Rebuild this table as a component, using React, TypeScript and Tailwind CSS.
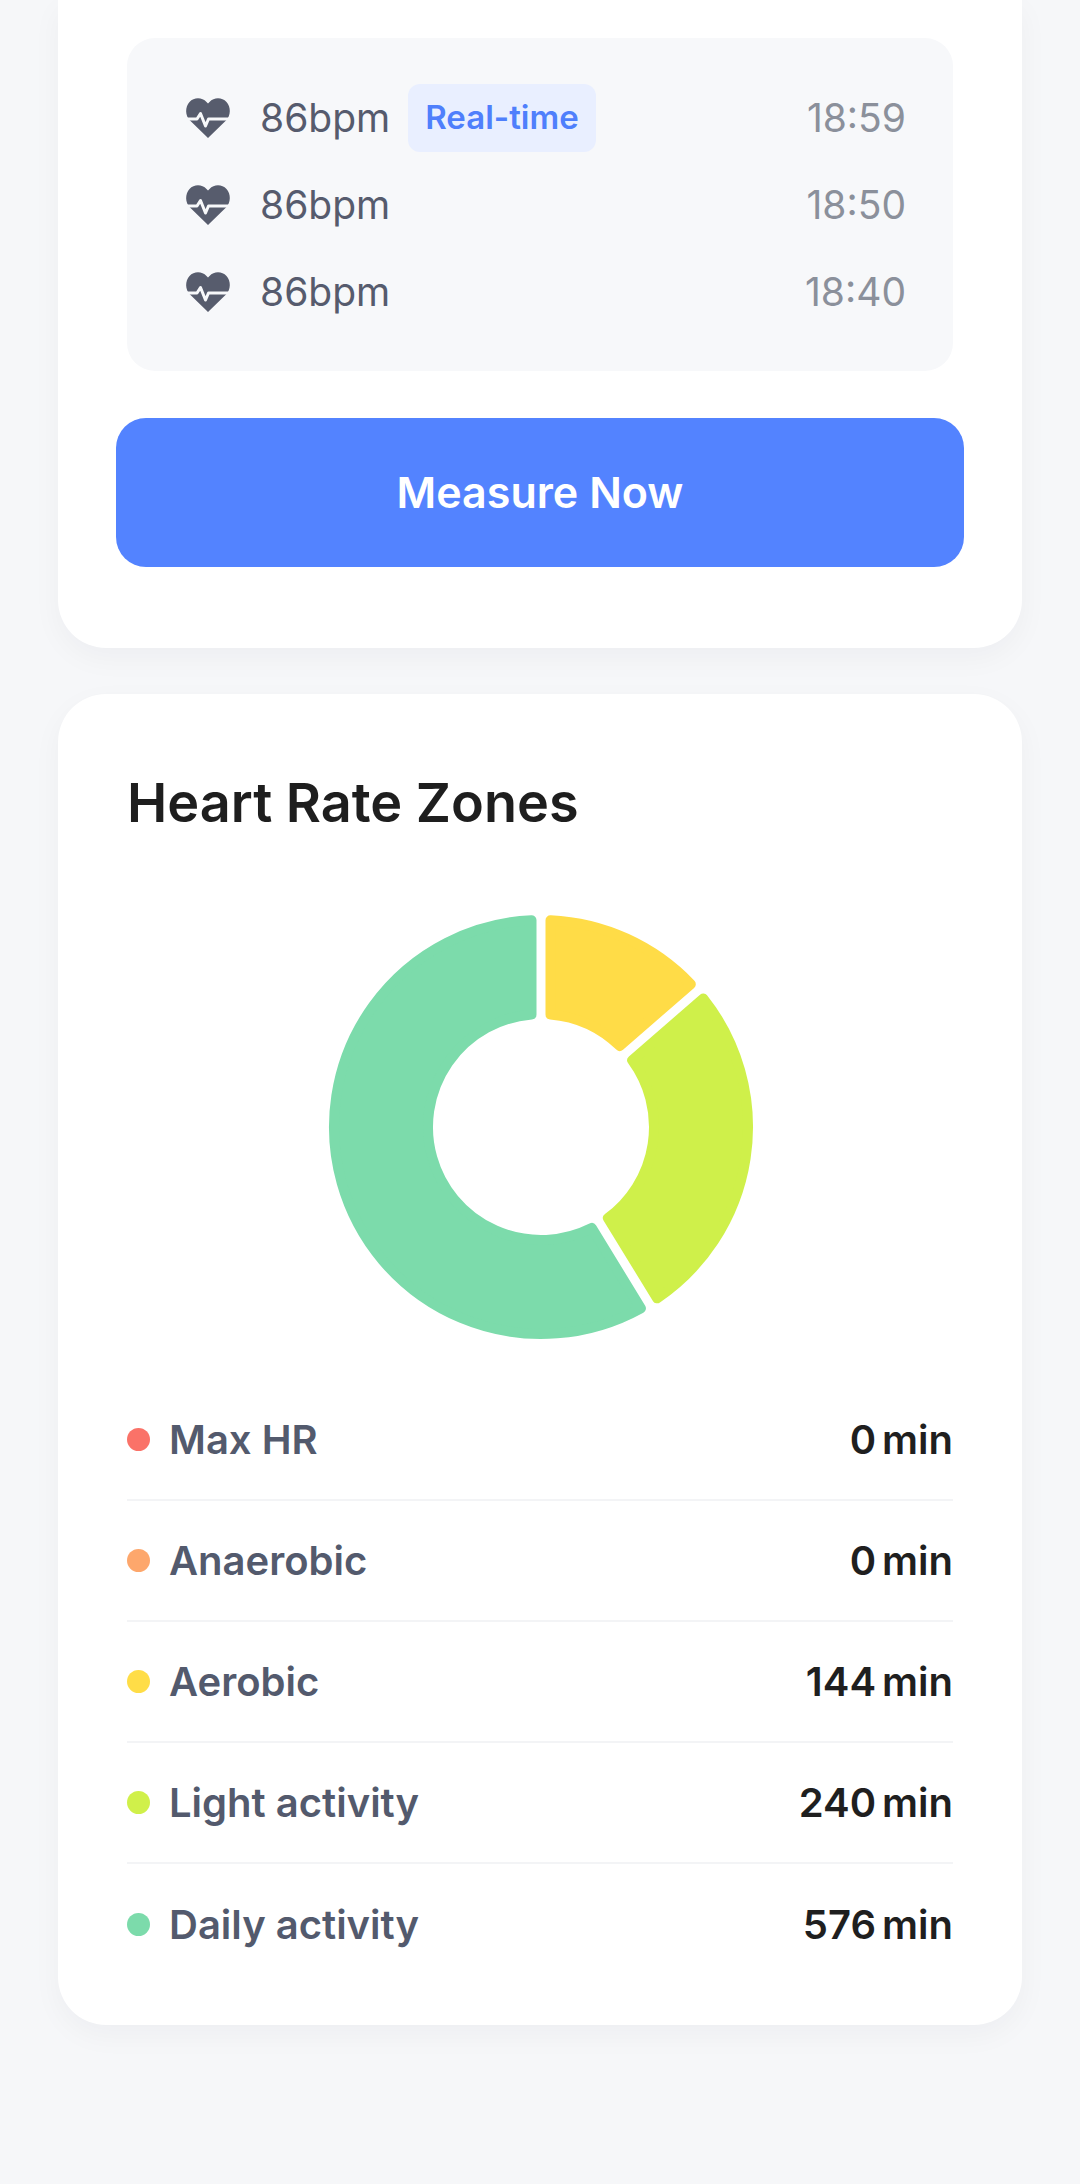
import React from 'react';

const font = { fontFamily: 'Inter, "Noto Sans", sans-serif' };

const readings = [
  { bpm: '86bpm', time: '18:59', live: true },
  { bpm: '86bpm', time: '18:50', live: false },
  { bpm: '86bpm', time: '18:40', live: false },
];

const zones = [
  { label: 'Max HR', value: '0', dot: 'bg-[#fa7268]' },
  { label: 'Anaerobic', value: '0', dot: 'bg-[#fda76c]' },
  { label: 'Aerobic', value: '144', dot: 'bg-[#ffdd47]' },
  { label: 'Light activity', value: '240', dot: 'bg-[#d0f04a]' },
  { label: 'Daily activity', value: '576', dot: 'bg-[#7cdbab]' },
];

// degrees from 12 o'clock, clockwise
const segments = [
  { from: 0, to: 49, color: '#ffdc47' },
  { from: 49, to: 148.5, color: '#cff04a' },
  { from: 148.5, to: 360, color: '#7cdbab' },
];

function HeartPulse() {
  return (
    <svg width="54" height="46" viewBox="0 0 54 46" className="shrink-0">
      <path
        d="M26 43 L8 25.5 C3 20.5 3 12 7.5 7 C12 2 20 2 24.5 7 L26 8.6 L27.5 7 C32 2 40 2 44.5 7 C49 12 49 20.5 44 25.5 Z"
        fill="#575c6d"
      />
      <polyline
        points="0,24 15,24 18.5,18.5 23.5,31 26.5,24 54,24"
        fill="none"
        stroke="#f7f8fa"
        strokeWidth="3"
        strokeLinejoin="round"
        strokeLinecap="round"
      />
    </svg>
  );
}

function Donut() {
  const cx = 220;
  const cy = 220;
  const R = 212;
  const r = 108;
  const gap = 4.5;
  const corner = 5;
  const ro = R - corner;
  const ri = r + corner;
  const pt = (rad: number, deg: number) => {
    const t = (deg * Math.PI) / 180;
    return `${(cx + rad * Math.sin(t)).toFixed(2)} ${(cy - rad * Math.cos(t)).toFixed(2)}`;
  };
  const off = (rad: number) => (Math.asin((gap + corner) / rad) * 180) / Math.PI;

  return (
    <svg width="440" height="440" viewBox="0 0 440 440">
      {segments.map((s) => {
        const os = s.from + off(ro);
        const oe = s.to - off(ro);
        const is = s.from + off(ri);
        const ie = s.to - off(ri);
        const large = oe - os > 180 ? 1 : 0;
        const largeIn = ie - is > 180 ? 1 : 0;
        const d = `M ${pt(ro, os)} A ${ro} ${ro} 0 ${large} 1 ${pt(ro, oe)} L ${pt(ri, ie)} A ${ri} ${ri} 0 ${largeIn} 0 ${pt(ri, is)} Z`;
        return (
          <path key={s.from} d={d} fill={s.color} stroke={s.color} strokeWidth={corner * 2} strokeLinejoin="round" />
        );
      })}
    </svg>
  );
}

export default function App() {
  return (
    <div className="min-h-[2184px] w-[1080px] bg-[#f6f7f9] pb-[160px]" style={font}>
      <div className="mx-[58px] rounded-b-[48px] bg-white px-[69px] pt-[38px] pb-[81px] shadow-[0_10px_30px_rgba(20,30,60,0.04)]">
        <div className="rounded-[28px] bg-[#f7f8fa] py-[36px] pl-[55px] pr-[47px]">
          {readings.map((r) => (
            <div key={r.time} className="flex h-[87px] items-center justify-between">
              <div className="flex items-center">
                <HeartPulse />
                <span className="ml-[24px] text-[39px] leading-none text-[#565b6d]">{r.bpm}</span>
                {r.live && (
                  <span className="ml-[18px] flex h-[68px] items-center rounded-[12px] bg-[#e9efff] px-[17px] text-[33px] font-semibold leading-none text-[#4f7ffc]">
                    Real-time
                  </span>
                )}
              </div>
              <span className="text-[39px] leading-none text-[#8b909b]">{r.time}</span>
            </div>
          ))}
        </div>
        <button className="-mx-[11px] mt-[47px] flex h-[149px] w-[calc(100%+22px)] items-center justify-center rounded-[30px] bg-[#5383ff] text-[43px] font-semibold text-white">
          Measure Now
        </button>
      </div>

      <div className="mx-[58px] mt-[46px] rounded-[48px] bg-white px-[69px] pt-[82px] pb-[40px] shadow-[0_10px_30px_rgba(20,30,60,0.04)]">
        <h2 className="text-[54px] font-semibold leading-none text-[#1e1e1e]">Heart Rate Zones</h2>
        <div className="mt-[77px] flex justify-center pl-[2px]">
          <Donut />
        </div>
        <div className="mt-[33px]">
          {zones.map((z, i) => (
            <div
              key={z.label}
              className={`flex h-[121px] items-center justify-between ${i < zones.length - 1 ? 'border-b-2 border-[#f3f4f6]' : ''}`}
            >
              <div className="flex items-center">
                <span className={`h-[23px] w-[23px] rounded-full ${z.dot}`} />
                <span className="ml-[19px] text-[40px] font-semibold leading-none text-[#535a6d]">{z.label}</span>
              </div>
              <div className="flex items-baseline text-[40px] font-semibold leading-none text-[#1f1f1f]">
                <span>{z.value}</span>
                <span className="ml-[6px]">min</span>
              </div>
            </div>
          ))}
        </div>
      </div>
    </div>
  );
}
